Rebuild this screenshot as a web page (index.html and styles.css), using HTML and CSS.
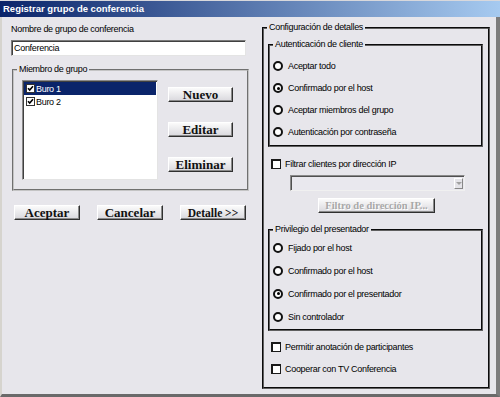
FILE: index.html
```html
<!DOCTYPE html>
<html lang="es">
<head>
    <meta charset="UTF-8">
    <title>Registrar grupo de conferencia</title>
    <link rel="stylesheet" href="styles.css">
</head>
<body>
    <div class="window">
        <div class="titlebar">Registrar grupo de conferencia</div>
        <div class="frame">
            <div class="col-left">
                <div class="label">Nombre de grupo de conferencia</div>
                <div class="textbox">Conferencia</div>

                <fieldset class="group group-members">
                    <legend>Miembro de grupo</legend>
                    <div class="members">
                        <ul class="listbox">
                            <li class="selected">
                                <svg class="tick" width="9" height="9" viewBox="0 0 9 9"><rect x="0.5" y="0.5" width="8" height="8" fill="#fff" stroke="#333"/><path d="M2 4.2 L3.7 6 L7 2.3" fill="none" stroke="#000" stroke-width="1.6"/></svg>Buro 1
                            </li>
                            <li>
                                <svg class="tick" width="9" height="9" viewBox="0 0 9 9"><rect x="0.5" y="0.5" width="8" height="8" fill="#fff" stroke="#333"/><path d="M2 4.2 L3.7 6 L7 2.3" fill="none" stroke="#000" stroke-width="1.6"/></svg>Buro 2
                            </li>
                        </ul>
                        <div class="side-buttons">
                            <button class="btn">Nuevo</button>
                            <button class="btn">Editar</button>
                            <button class="btn">Eliminar</button>
                        </div>
                    </div>
                </fieldset>

                <div class="actions">
                    <button class="btn">Aceptar</button>
                    <button class="btn">Cancelar</button>
                    <button class="btn btn-small">Detalle &gt;&gt;</button>
                </div>
            </div>

            <div class="col-right">
                <fieldset class="group group-outer">
                    <legend>Configuración de detalles</legend>

                    <fieldset class="group group-inner group-auth">
                        <legend>Autenticación de cliente</legend>
                        <div class="option"><span class="radio"></span>Aceptar todo</div>
                        <div class="option"><span class="radio checked"></span>Confirmado por el host</div>
                        <div class="option"><span class="radio"></span>Aceptar miembros del grupo</div>
                        <div class="option"><span class="radio"></span>Autenticación por contraseña</div>
                    </fieldset>

                    <div class="option check-row first-check"><span class="check"></span>Filtrar clientes por dirección IP</div>
                    <div class="select"><span class="select-arrow"></span></div>
                    <button class="btn btn-disabled">Filtro de dirección IP...</button>

                    <fieldset class="group group-inner group-presenter">
                        <legend>Privilegio del presentador</legend>
                        <div class="option"><span class="radio"></span>Fijado por el host</div>
                        <div class="option"><span class="radio"></span>Confirmado por el host</div>
                        <div class="option"><span class="radio checked"></span>Confirmado por el presentador</div>
                        <div class="option"><span class="radio"></span>Sin controlador</div>
                    </fieldset>

                    <div class="option check-row last-checks"><span class="check"></span>Permitir anotación de participantes</div>
                    <div class="option check-row"><span class="check"></span>Cooperar con TV Conferencia</div>
                </fieldset>
            </div>
        </div>
    </div>
</body>
</html>
```

FILE: styles.css
```css
body {
    margin: 0;
    font-family: "Liberation Sans", Arial, sans-serif;
    font-size: 9px;
    color: #000;
    background-color: #e7e6eb;
}
.window {
    width: 500px;
    height: 397px;
    background-color: #e7e6eb;
}
.titlebar {
    height: 16px;
    border-top: 1px solid #d8d8dc;
    background: linear-gradient(to right, #0a246a, #a6caf0);
    color: #fff;
    font-weight: bold;
    font-size: 9.5px;
    line-height: 16px;
    padding-left: 3px;
}
.frame {
    display: flex;
    align-items: flex-start;
    height: 380px;
    box-sizing: border-box;
    padding: 7px 0 0 9px;
    border-left: 2px solid #d6d4ce;
    border-right: 4px solid #7c7c7c;
    border-bottom: 3px solid #6a6a6a;
    letter-spacing: -0.3px;
}
.col-left {
    width: 238px;
}
.label {
    line-height: 11px;
}
.textbox {
    margin-top: 5px;
    width: 235px;
    height: 16px;
    box-sizing: border-box;
    background-color: #fff;
    border: 1px solid;
    border-color: #7a7a7a #e4e4e4 #e4e4e4 #7a7a7a;
    box-shadow: inset 1px 1px 0 #404040;
    padding-left: 2px;
    line-height: 14px;
}

/* group boxes */
.group {
    margin: 0;
    padding: 0;
    min-inline-size: 0;
    border: 2px groove #c4c4c4;
}
.group legend {
    margin-left: 3px;
    padding: 0 2px;
    line-height: 11px;
}
.group-members {
    margin: 8px 0 0 1px;
    width: 237px;
    box-sizing: border-box;
}
.members {
    display: flex;
    margin: 5px 0 9px 8px;
}
.listbox {
    list-style: none;
    margin: 0;
    padding: 1px 0 0 0;
    width: 136px;
    height: 100px;
    box-sizing: border-box;
    background-color: #fff;
    border: 1px solid;
    border-color: #8a8a8a #e4e4e4 #e4e4e4 #8a8a8a;
    box-shadow: inset 1px 1px 0 #404040;
}
.listbox li {
    display: flex;
    align-items: center;
    height: 13px;
    margin-left: 1px;
    padding-left: 2px;
}
.listbox li.selected {
    background-color: #0a246a;
    color: #fff;
    margin-right: 1px;
}
.tick {
    margin-right: 1px;
}
.side-buttons {
    display: flex;
    flex-direction: column;
    gap: 20px;
    margin: 7px 0 0 10px;
}

/* buttons */
.btn {
    display: block;
    width: 65px;
    height: 15px;
    padding: 0;
    box-sizing: border-box;
    font-family: "Liberation Serif", "Times New Roman", serif;
    font-weight: bold;
    font-size: 13px;
    line-height: 12px;
    letter-spacing: 0;
    color: #111;
    background: linear-gradient(#fbfbfb, #d9d8dd);
    border: 1px solid;
    border-color: #fff #303030 #303030 #fff;
    box-shadow: inset -1px -1px 0 #8a8a8a;
}
.btn-small {
    font-size: 11.5px;
}
.btn-disabled {
    margin: 7px 0 0 54px;
    width: 117px;
    font-size: 10.5px;
    color: #a8a8a8;
    text-shadow: 1px 1px 0 #fff;
}
.actions {
    display: flex;
    gap: 17px;
    margin: 14px 0 0 3px;
}
.actions .btn {
    width: 66px;
}

/* right side */
.col-right {
    margin: -2px 0 0 13px;
}
.group-outer {
    width: 228px;
    box-sizing: border-box;
    border-color: #606060;
    padding-bottom: 7px;
}
.group-inner {
    width: 215px;
    box-sizing: border-box;
    margin-left: 4px;
    border-color: #606060;
}
.group-auth {
    margin-top: 6px;
    padding: 5px 0 2px 0;
}
.group-presenter {
    margin-top: 11px;
    padding: 1px 0 1px 0;
}
.option {
    display: flex;
    align-items: center;
    height: 22px;
}
.group-presenter .option {
    height: 23px;
}
.radio {
    width: 10px;
    height: 10px;
    box-sizing: border-box;
    margin: 0 5px 0 3px;
    border: 2px solid #111;
    border-radius: 50%;
    background-color: #fff;
    display: flex;
    align-items: center;
    justify-content: center;
}
.radio.checked::after {
    content: "";
    width: 3px;
    height: 3px;
    border-radius: 50%;
    background-color: #000;
}
.check-row {
    margin-left: 7px;
}
.first-check {
    margin-top: 6px;
}
.last-checks {
    margin-top: 5px;
}
.check {
    width: 10px;
    height: 10px;
    box-sizing: border-box;
    margin-right: 4px;
    border: 2px solid #1a1a1a;
    border-right-width: 1px;
    border-bottom-width: 1px;
    background-color: #fff;
}
.select {
    display: flex;
    justify-content: flex-end;
    margin-left: 26px;
    width: 175px;
    height: 16px;
    box-sizing: border-box;
    border: 1px solid;
    border-color: #8a8a8a #f0f0f0 #f0f0f0 #8a8a8a;
    box-shadow: inset 1px 1px 0 #505050;
    background-color: #e9e8ee;
    padding: 2px 1px 1px 0;
}
.select-arrow {
    width: 9px;
    height: 11px;
    box-sizing: border-box;
    border: 1px solid;
    border-color: #fff #888 #888 #fff;
    background-color: #e4e3e8;
    display: flex;
    align-items: center;
    justify-content: center;
}
.select-arrow::after {
    content: "";
    border-left: 3px solid transparent;
    border-right: 3px solid transparent;
    border-top: 3px solid #a0a0a0;
}
```
